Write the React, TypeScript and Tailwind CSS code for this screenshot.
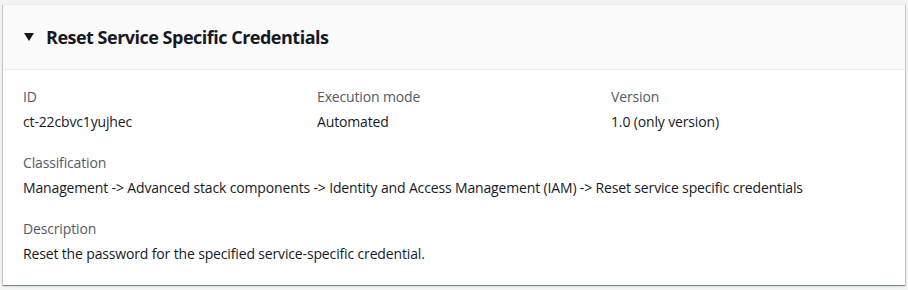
import React from 'react';

interface Field {
  label: string;
  value: string;
}

const topFields: Field[] = [
  { label: 'ID', value: 'ct-22cbvc1yujhec' },
  { label: 'Execution mode', value: 'Automated' },
  { label: 'Version', value: '1.0 (only version)' },
];

const fullFields: Field[] = [
  {
    label: 'Classification',
    value:
      'Management -> Advanced stack components -> Identity and Access Management (IAM) -> Reset service specific credentials',
  },
  { label: 'Description', value: 'Reset the password for the specified service-specific credential.' },
];

function FieldBlock({ field }: { field: Field }) {
  return (
    <div>
      <div className="text-[14px] leading-[20px] tracking-[-0.15px] text-[#545b64]">{field.label}</div>
      <div className="mt-[5px] text-[14px] leading-[20px] tracking-[-0.15px] text-[#16191f]">{field.value}</div>
    </div>
  );
}

export default function App() {
  return (
    <div
      className="w-[908px] h-[290px] bg-[#f2f3f3] pt-[4px] pl-[3px] pr-[3px]"
      style={{ fontFamily: '"Open Sans", "Noto Sans", Arial, sans-serif' }}
    >
      <div className="bg-white border-t border-[#eaeded] shadow-[0_1px_1px_0_rgba(0,28,36,0.3),1px_1px_1px_0_rgba(0,28,36,0.15),-1px_1px_1px_0_rgba(0,28,36,0.15)]">
        {/* header */}
        <div className="h-[65px] bg-[#fafafa] border-b border-[#eaeded] flex items-center pl-[21px]">
          <svg width="10" height="8" viewBox="0 0 10 8" className="mr-[12px]">
            <polygon points="0,0 10,0 5,8" fill="#16191f" />
          </svg>
          <h2 className="text-[18px] font-bold text-[#16191f] leading-[22px] tracking-[-0.5px]">
            Reset Service Specific Credentials
          </h2>
        </div>

        {/* body */}
        <div className="px-[20px] pt-[17px] pb-[21px] flex flex-col gap-[21px]">
          <div className="grid grid-cols-3 gap-x-5">
            {topFields.map((f) => (
              <FieldBlock key={f.label} field={f} />
            ))}
          </div>
          {fullFields.map((f) => (
            <FieldBlock key={f.label} field={f} />
          ))}
        </div>
      </div>
    </div>
  );
}
